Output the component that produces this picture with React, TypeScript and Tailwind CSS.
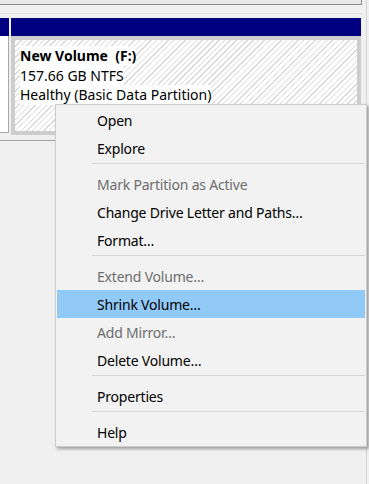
import React from "react";

type Item = { label: string; disabled?: boolean; active?: boolean } | "sep";

const items: Item[] = [
  { label: "Open" },
  { label: "Explore" },
  "sep",
  { label: "Mark Partition as Active", disabled: true },
  { label: "Change Drive Letter and Paths…" },
  { label: "Format…" },
  "sep",
  { label: "Extend Volume…", disabled: true },
  { label: "Shrink Volume…", active: true },
  { label: "Add Mirror…", disabled: true },
  { label: "Delete Volume…" },
  "sep",
  { label: "Properties" },
  "sep",
  { label: "Help" },
];

function ContextMenu() {
  return (
    <div className="absolute left-[55px] top-[104px] w-[312px] border border-[#cccccc] bg-[#f2f2f2] px-px pt-px shadow-[2px_2px_3px_rgba(0,0,0,0.35)]">
      {items.map((it, i) =>
        it === "sep" ? (
          <div key={i} className="ml-[35px] mt-px mb-[6px] h-px bg-[#d7d7d7]" />
        ) : (
          <div
            key={i}
            className={
              "flex h-[28px] items-center pl-[40px] text-[14px] tracking-[-0.2px] " +
              (it.active ? "bg-[#91c9f7] " : "") +
              (it.disabled ? "text-[#6d6d6d]" : "text-black")
            }
          >
            {it.label}
          </div>
        )
      )}
    </div>
  );
}

export default function App() {
  return (
    <div
      className="relative h-[484px] w-[369px] overflow-hidden bg-[#f0f0f0]"
      style={{ fontFamily: '"Noto Sans", "Open Sans", sans-serif' }}
    >
      <div className="h-full w-[367px] border-r border-[#d4d4d4]">
        <div className="h-[5px] w-[362px] border-b border-r border-[#8c8c8c] bg-[#e8e8e8]" />
        <div className="mt-[8px] h-px w-[362px] bg-[#e2e2e2]" />
        <div className="mt-[4px] flex items-start">
          <div className="w-[9px]">
            <div className="h-[18px] bg-[#000080]" />
            <div className="h-[97px] border-b border-r border-[#a8a8a8] bg-white" />
          </div>
          <div className="ml-[2px] w-[350px]">
            <div className="h-[18px] bg-[#000080]" />
            <div className="h-[99px] border-[4px] border-[#cdcdcd] bg-[repeating-linear-gradient(135deg,#dadada_0px,#dadada_1px,#ffffff_1px,#ffffff_4px)] pl-[5px] pt-[6px] text-[14px] leading-[19.5px] text-black">
              <div className="w-fit bg-white font-bold">New Volume&nbsp;&nbsp;(F:)</div>
              <div className="w-fit bg-white">157.66 GB NTFS</div>
              <div className="w-fit bg-white">Healthy (Basic Data Partition)</div>
            </div>
          </div>
        </div>
        <div className="mt-[5px] h-px w-[362px] bg-[#a0a0a0]" />
      </div>
      <ContextMenu />
    </div>
  );
}
